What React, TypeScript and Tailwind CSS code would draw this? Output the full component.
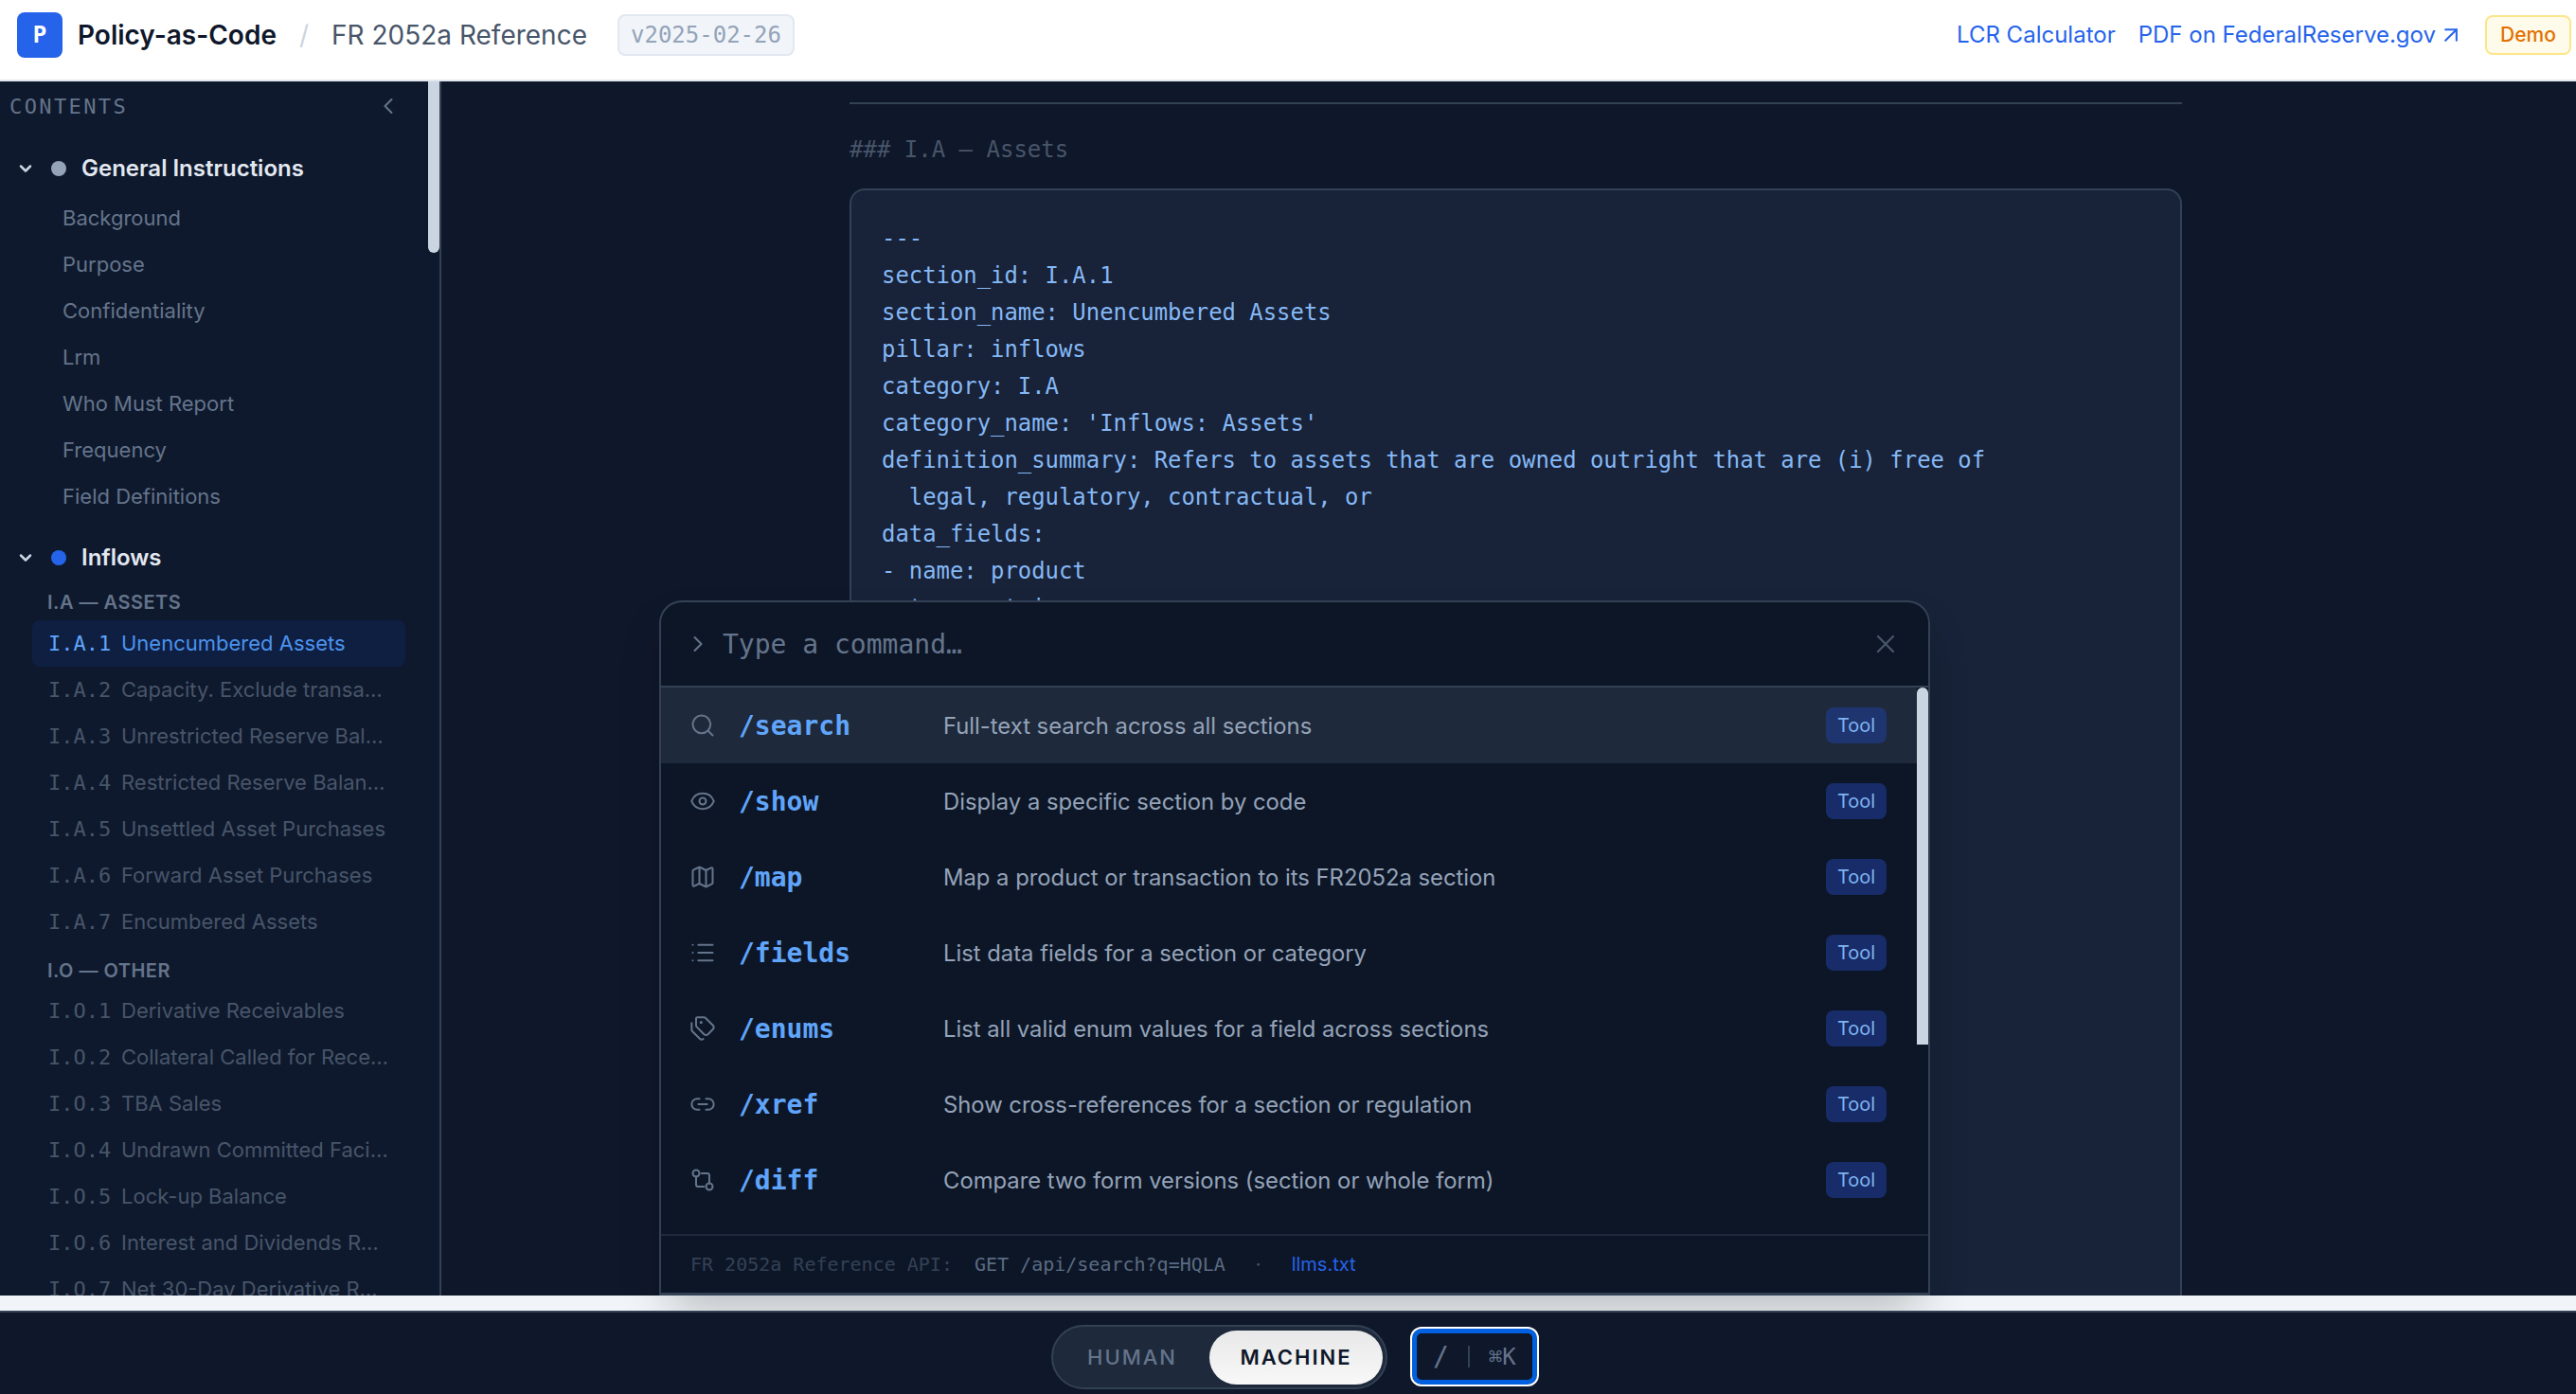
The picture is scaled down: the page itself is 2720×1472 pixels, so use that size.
import { ArrowUpRight, ChevronDown, ChevronLeft, ChevronRight, Eye, Link2, List, Map, Search, Tags, X } from 'lucide-react'

const sans = "font-['Inter',sans-serif]"
const mono = "font-['DejaVu_Sans_Mono',monospace]"

const generalItems = ['Background', 'Purpose', 'Confidentiality', 'Lrm', 'Who Must Report', 'Frequency', 'Field Definitions']

const assets = [
  ['I.A.1', 'Unencumbered Assets'],
  ['I.A.2', 'Capacity. Exclude transactions'],
  ['I.A.3', 'Unrestricted Reserve Balances'],
  ['I.A.4', 'Restricted Reserve Balances'],
  ['I.A.5', 'Unsettled Asset Purchases'],
  ['I.A.6', 'Forward Asset Purchases'],
  ['I.A.7', 'Encumbered Assets'],
]

const other = [
  ['I.O.1', 'Derivative Receivables'],
  ['I.O.2', 'Collateral Called for Receipt'],
  ['I.O.3', 'TBA Sales'],
  ['I.O.4', 'Undrawn Committed Facilities'],
  ['I.O.5', 'Lock-up Balance'],
  ['I.O.6', 'Interest and Dividends Receivable'],
  ['I.O.7', 'Net 30-Day Derivative Receivables'],
]

// lucide's git-compare has arrow heads, the picture doesn't
function DiffIcon({ className }: { className?: string }) {
  return (
    <svg className={className} viewBox="0 0 24 24" fill="none" stroke="currentColor" strokeWidth={1.75} strokeLinecap="round" strokeLinejoin="round">
      <circle cx="18" cy="18" r="3" />
      <circle cx="6" cy="6" r="3" />
      <path d="M11 6h5a2 2 0 0 1 2 2v7" />
      <path d="M13 18H8a2 2 0 0 1-2-2V9" />
    </svg>
  )
}

const commands = [
  { icon: Search, name: '/search', desc: 'Full-text search across all sections' },
  { icon: Eye, name: '/show', desc: 'Display a specific section by code' },
  { icon: Map, name: '/map', desc: 'Map a product or transaction to its FR2052a section' },
  { icon: List, name: '/fields', desc: 'List data fields for a section or category' },
  { icon: Tags, name: '/enums', desc: 'List all valid enum values for a field across sections' },
  { icon: Link2, name: '/xref', desc: 'Show cross-references for a section or regulation' },
  { icon: DiffIcon, name: '/diff', desc: 'Compare two form versions (section or whole form)' },
]

const code = `---
section_id: I.A.1
section_name: Unencumbered Assets
pillar: inflows
category: I.A
category_name: 'Inflows: Assets'
definition_summary: Refers to assets that are owned outright that are (i) free of
  legal, regulatory, contractual, or
data_fields:
- name: product
  type: string`

function SectionRow({ code, label, active }: { code: string; label: string; active?: boolean }) {
  return (
    <div className={`ml-[34px] flex h-[49px] w-[394px] items-center rounded-lg px-[17px] ${active ? 'bg-[#0f1f42] text-[#4b93ee]' : 'text-[#475569]'}`}>
      <span className={`${mono} w-[77px] shrink-0 text-[22px] ${active ? 'text-[#60a5fa]' : ''}`}>{code}</span>
      <span className="truncate text-[22px]">{label}</span>
    </div>
  )
}

function GroupTitle({ label, dot }: { label: string; dot: string }) {
  return (
    <div className="flex h-[56px] items-center pl-[17px]">
      <ChevronDown className="mr-[17px] h-5 w-5 text-[#cbd5e1]" strokeWidth={3} />
      <span className={`mr-4 h-4 w-4 rounded-full ${dot}`} />
      <span className="text-[24px] font-semibold text-[#e2e8f0]">{label}</span>
    </div>
  )
}

function Sidebar() {
  return (
    <aside className="relative w-[466px] shrink-0 overflow-hidden border-r-2 border-[#334155] bg-[#0f192d]">
      <div className="absolute right-0 top-0 h-[181px] w-3 rounded-b-md bg-[#cbd5e1]" />
      <div className="flex h-[52px] items-center justify-between pl-[10px] pr-[40px]">
        <span className={`${mono} text-[22px] tracking-[2.4px] text-[#64748b]`}>CONTENTS</span>
        <ChevronLeft className="h-7 w-7 text-[#64748b]" strokeWidth={1.75} />
      </div>
      <div className="mt-3">
        <GroupTitle label="General Instructions" dot="bg-[#94a3b8]" />
        {generalItems.map((item) => (
          <div key={item} className="flex h-[49px] items-center pl-[66px] text-[22px] text-[#64748b]">{item}</div>
        ))}
      </div>
      <div className="mt-3">
        <GroupTitle label="Inflows" dot="bg-[#2563eb]" />
        <div className="mb-[2px] mt-[2px] flex h-[34px] items-center pl-[50px] text-[20px] font-semibold tracking-[0.5px] text-[#64748b]">I.A — ASSETS</div>
        {assets.map(([c, l], i) => (
          <SectionRow key={c} code={c} label={l} active={i === 0} />
        ))}
        <div className="mb-[1px] mt-[10px] flex h-[34px] items-center pl-[50px] text-[20px] font-semibold tracking-[0.5px] text-[#64748b]">I.O — OTHER</div>
        {other.map(([c, l]) => (
          <SectionRow key={c} code={c} label={l} />
        ))}
      </div>
    </aside>
  )
}

function CommandPalette() {
  return (
    <div className="absolute left-[696px] top-[634px] z-10 flex h-[734px] w-[1342px] flex-col overflow-hidden rounded-t-[24px] border-2 border-b-[3px] border-[#334155] bg-[#0d1627] shadow-2xl">
      <div className="flex h-[90px] shrink-0 items-center border-b-2 border-[#334155] pl-[25px] pr-[29px]">
        <ChevronRight className="mr-3 h-7 w-7 text-[#64748b]" strokeWidth={1.75} />
        <span className={`${mono} flex-1 pt-[2px] text-[28px] text-[#64748b]`}>Type a command…</span>
        <X className="h-8 w-8 text-[#475569]" strokeWidth={1.75} />
      </div>
      <div className="relative min-h-0 flex-1">
        <div className="absolute right-0 top-0 h-[377px] w-3 rounded-t-md bg-[#cbd5e1]" />
        {commands.map((c, i) => {
          const Icon = c.icon
          return (
            <div key={c.name} className={`mr-3 flex h-20 items-center pl-[30px] pr-[32px] ${i === 0 ? 'bg-[#1e293b]' : ''}`}>
              <Icon className="mr-6 h-7 w-7 shrink-0 text-[#64748b]" strokeWidth={1.75} />
              <span className={`${mono} w-[216px] shrink-0 pt-[2px] text-[28px] font-semibold text-[#60a5fa]`}>{c.name}</span>
              <span className="flex-1 pt-[1px] text-[23.8px] text-[#94a3b8]">{c.desc}</span>
              <span className={`flex h-[38px] w-16 items-center justify-center rounded-lg text-[20px] text-[#7fb2f0] ${i === 0 ? 'bg-[#1e3570]' : 'bg-[#172c68]'}`}>Tool</span>
            </div>
          )
        })}
      </div>
      <div className="flex h-[62px] shrink-0 items-center border-t-2 border-[#1e293b] pl-[31px] text-[20px]">
        <span className={`${mono} text-[#334155]`}>FR 2052a Reference API:</span>
        <span className={`${mono} ml-[23px] text-[#5b6b82]`}>GET /api/search?q=HQLA</span>
        <span className="ml-8 text-[#475569]">·</span>
        <span className="ml-8 text-[#2563eb]">llms.txt</span>
      </div>
    </div>
  )
}

export default function App() {
  return (
    <div className={`${sans} relative flex h-[1472px] w-[2720px] flex-col overflow-hidden bg-[#f1f5f9]`}>
      {/* Header */}
      <header className="flex h-[86px] shrink-0 items-center justify-between border-b-2 border-[#e2e8f0] bg-white pb-[10px] pl-[18px] pr-[5px]">
        <div className="flex items-center">
          <div className={`${mono} flex h-12 w-12 items-center justify-center rounded-lg bg-[#2563eb] text-[24px] font-bold text-white`}>P</div>
          <span className="ml-4 text-[28px] font-semibold text-[#0f172a]">Policy-as-Code</span>
          <span className="ml-6 text-[28px] text-[#cbd5e1]">/</span>
          <span className="ml-6 text-[28px] text-[#475569]">FR 2052a Reference</span>
          <span className={`${mono} ml-8 flex h-11 items-center rounded-lg border-2 border-[#e2e8f0] bg-[#f1f5f9] px-3 text-[24px] text-[#94a3b8]`}>v2025-02-26</span>
        </div>
        <div className="flex items-center text-[24px] text-[#2563eb]">
          <span>LCR Calculator</span>
          <span className="ml-6 flex items-center">PDF on FederalReserve.gov <ArrowUpRight className="ml-[2px] h-7 w-7" strokeWidth={1.75} /></span>
          <span className="ml-[22px] flex h-[42px] w-[91px] items-center justify-center rounded-lg border-2 border-[#fde68a] bg-[#fffbeb] text-[21px] font-medium text-[#e17100]">Demo</span>
        </div>
      </header>

      {/* Body */}
      <div className="flex min-h-0 flex-1">
        <Sidebar />
        <main className="min-w-0 flex-1 overflow-hidden bg-[#0f172a] pl-[431px] pt-[22px]">
          <div className="w-[1407px]">
            <div className="h-[2px] bg-[#334155]" />
            <div className={`${mono} mt-[29px] text-[24px] leading-[39px] text-[#475569]`}>### I.A — Assets</div>
            <pre className={`${mono} mt-[21px] min-h-[1300px] rounded-t-2xl border-2 border-[#334155] bg-[#182238] p-8 text-[23.9px] leading-[39px] text-[#85b8f5]`}>{code}</pre>
          </div>
        </main>
      </div>

      {/* Page background showing under the content */}
      <div className="h-4 shrink-0" />

      {/* Bottom bar */}
      <div className="relative z-20 flex h-[88px] shrink-0 items-start border-t-2 border-[#334155] bg-[#0f172a] pl-[1110px] pt-[13px]">
        <div className="flex h-[68px] w-[355px] items-center rounded-full border-2 border-[#334155] bg-[#1e293b] pl-[36px] pr-[3px] text-[22px] tracking-[2px]">
          <span className="flex-1 font-medium text-[#64748b]">HUMAN</span>
          <span className="flex h-[57px] w-[183px] items-center justify-center rounded-full bg-gradient-to-b from-[#e8e8e8] to-[#f8f8f8] font-semibold text-[#0f172a]">MACHINE</span>
        </div>
        <div className="ml-6 mt-[2px] flex h-[63px] w-[136px] items-center rounded-xl border-2 border-white pl-[22px] text-[#64748b] shadow-[inset_0_0_0_5px_#0060df]">
          <span className={`${mono} text-[28px]`}>/</span>
          <span className="ml-[20px] h-[23px] w-[2px] bg-[#334155]" />
          <span className={`${mono} ml-[20px] text-[24px]`}>⌘K</span>
        </div>
      </div>

      <CommandPalette />
    </div>
  )
}
